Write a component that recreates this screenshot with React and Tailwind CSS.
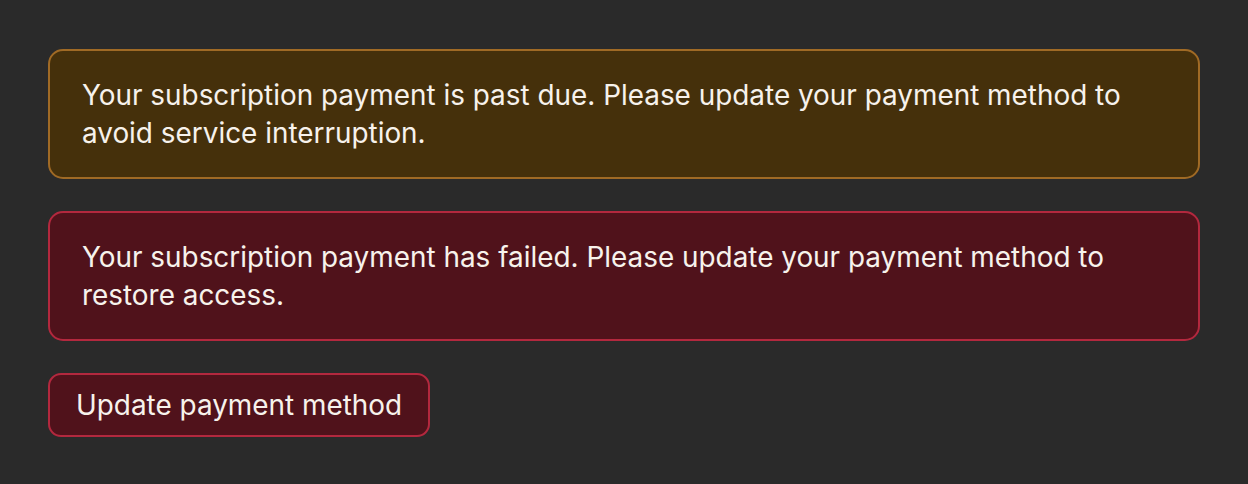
export default function App() {
  return (
    <div className="min-h-screen bg-[#2a2a2a] px-[48px] py-[49px] font-['Inter','Noto_Sans',sans-serif] text-[27.9px] leading-[38px] text-[#f7f2ec]">
      <div className="flex flex-col items-start gap-[32px]">
        <div className="w-full rounded-[15px] border-2 border-[#a06a25] bg-[#45300b] px-[32px] py-[25px]">
          Your subscription payment is past due. Please update your payment method to avoid service interruption.
        </div>
        <div className="w-full rounded-[15px] border-2 border-[#b3283e] bg-[#50121b] px-[32px] py-[25px]">
          Your subscription payment has failed. Please update your payment method to restore access.
        </div>
        <button className="rounded-[13px] border-2 border-[#b3283e] bg-[#50121b] px-[26px] py-[11px] text-[27.9px] leading-[38px] text-[#f7f2ec]">
          Update payment method
        </button>
      </div>
    </div>
  );
}
